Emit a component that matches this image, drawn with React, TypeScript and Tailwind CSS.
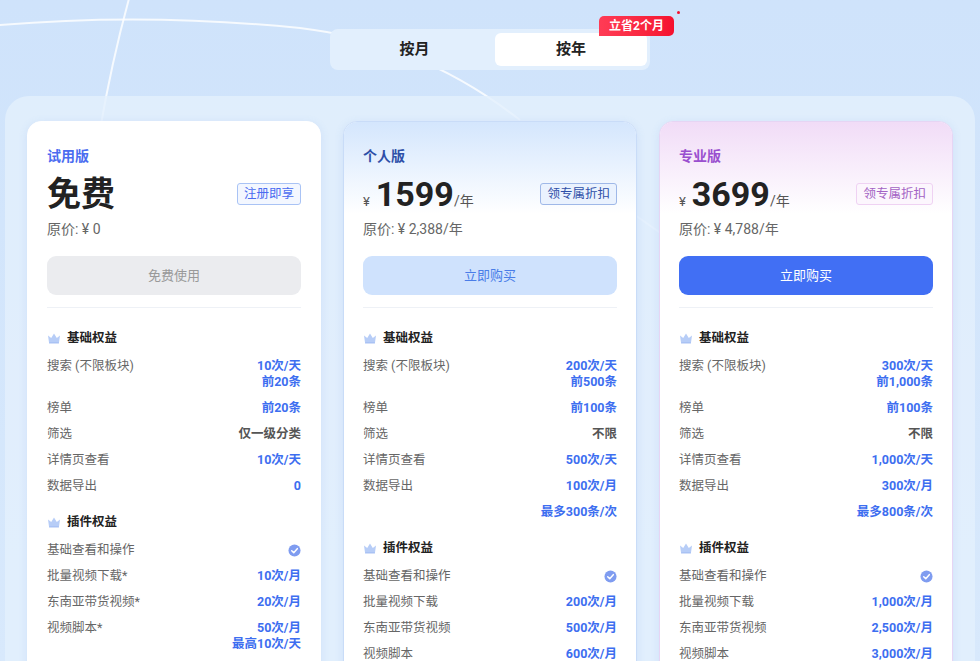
import React from 'react';

type Row = { label: string; values?: string[]; tone?: 'blue' | 'gray'; check?: boolean };

const Crown = () => (
  <svg width="14" height="12" viewBox="0 0 14 12" className="shrink-0">
    <path d="M1 3.5 L4.2 6 L7 1.5 L9.8 6 L13 3.5 L12 10.5 H2 Z" fill="#b7cdf7" />
    <rect x="2" y="10" width="10" height="1.6" rx="0.5" fill="#a9c2f4" />
  </svg>
);

const Check = () => (
  <svg width="13" height="13" viewBox="0 0 14 14">
    <circle cx="7" cy="7" r="6.5" fill="#7f9cf0" />
    <path d="M4 7.2 L6.2 9.3 L10 5" stroke="#fff" strokeWidth="1.6" fill="none" strokeLinecap="round" strokeLinejoin="round" />
  </svg>
);

function RowItem({ row }: { row: Row }) {
  return (
    <div className="flex justify-between py-[5px] leading-4 text-[12.5px]">
      <span className="text-[#666]">{row.label}</span>
      {row.check ? (
        <span className="flex items-center"><Check /></span>
      ) : (
        <div className={`text-right font-bold ${row.tone === 'gray' ? 'text-[#555]' : 'text-[#3d6ef0]'}`}>
          {row.values?.map((v) => <div key={v}>{v}</div>)}
        </div>
      )}
    </div>
  );
}

function Section({ title, rows }: { title: string; rows: Row[] }) {
  return (
    <div>
      <div className="flex items-center gap-1.5 text-[12.5px] font-bold text-[#222] leading-4 mb-[7px]">
        <Crown />
        {title}
      </div>
      {rows.map((r, i) => <RowItem key={i} row={r} />)}
    </div>
  );
}

type Plan = {
  name: string;
  nameColor: string;
  head: string;
  price: React.ReactNode;
  badge: string;
  badgeCls: string;
  original: string;
  btn: string;
  btnCls: string;
  basic: Row[];
  plugin: Row[];
  cardCls: string;
};

const plans: Plan[] = [
  {
    name: '试用版',
    nameColor: 'text-[#4a6cf0]',
    head: 'bg-white',
    price: <span className="text-[34px] font-bold text-[#222] leading-none">免费</span>,
    badge: '注册即享',
    badgeCls: 'border-[#a9c3f5] text-[#4a6cf0] bg-[#f3f7ff]',
    original: '原价: ¥ 0',
    btn: '免费使用',
    btnCls: 'bg-[#ebecef] text-[#999]',
    cardCls: 'border-white',
    basic: [
      { label: '搜索 (不限板块)', values: ['10次/天', '前20条'] },
      { label: '榜单', values: ['前20条'] },
      { label: '筛选', values: ['仅一级分类'], tone: 'gray' },
      { label: '详情页查看', values: ['10次/天'] },
      { label: '数据导出', values: ['0'] },
    ],
    plugin: [
      { label: '基础查看和操作', check: true },
      { label: '批量视频下载*', values: ['10次/月'] },
      { label: '东南亚带货视频*', values: ['20次/月'] },
      { label: '视频脚本*', values: ['50次/月', '最高10次/天'] },
    ],
  },
  {
    name: '个人版',
    nameColor: 'text-[#2e4fa8]',
    head: 'bg-gradient-to-b from-[#d4e6fd] to-white',
    price: (
      <span className="flex items-baseline text-[#222]">
        <span className="text-[13px] mr-1.5 text-[#555]">¥</span>
        <span className="text-[34px] font-bold leading-none">1599</span>
        <span className="text-[14px] text-[#555]">/年</span>
      </span>
    ),
    badge: '领专属折扣',
    badgeCls: 'border-[#9fb8e8] text-[#2e4fa8] bg-[#eaf2fe]',
    original: '原价: ¥ 2,388/年',
    btn: '立即购买',
    btnCls: 'bg-[#cfe2fd] text-[#4a7de8]',
    cardCls: 'border-[#c9dcf8]',
    basic: [
      { label: '搜索 (不限板块)', values: ['200次/天', '前500条'] },
      { label: '榜单', values: ['前100条'] },
      { label: '筛选', values: ['不限'], tone: 'gray' },
      { label: '详情页查看', values: ['500次/天'] },
      { label: '数据导出', values: ['100次/月'] },
      { label: '', values: ['最多300条/次'] },
    ],
    plugin: [
      { label: '基础查看和操作', check: true },
      { label: '批量视频下载', values: ['200次/月'] },
      { label: '东南亚带货视频', values: ['500次/月'] },
      { label: '视频脚本', values: ['600次/月'] },
    ],
  },
  {
    name: '专业版',
    nameColor: 'text-[#9a4fcf]',
    head: 'bg-gradient-to-b from-[#f1dcf7] to-white',
    price: (
      <span className="flex items-baseline text-[#222]">
        <span className="text-[13px] mr-1.5 text-[#555]">¥</span>
        <span className="text-[34px] font-bold leading-none">3699</span>
        <span className="text-[14px] text-[#555]">/年</span>
      </span>
    ),
    badge: '领专属折扣',
    badgeCls: 'border-[#efd2f3] text-[#a363c4] bg-[#fcf6fd]',
    original: '原价: ¥ 4,788/年',
    btn: '立即购买',
    btnCls: 'bg-[#416ff4] text-white',
    cardCls: 'border-[#e6d5f4]',
    basic: [
      { label: '搜索 (不限板块)', values: ['300次/天', '前1,000条'] },
      { label: '榜单', values: ['前100条'] },
      { label: '筛选', values: ['不限'], tone: 'gray' },
      { label: '详情页查看', values: ['1,000次/天'] },
      { label: '数据导出', values: ['300次/月'] },
      { label: '', values: ['最多800条/次'] },
    ],
    plugin: [
      { label: '基础查看和操作', check: true },
      { label: '批量视频下载', values: ['1,000次/月'] },
      { label: '东南亚带货视频', values: ['2,500次/月'] },
      { label: '视频脚本', values: ['3,000次/月'] },
    ],
  },
];

function Card({ p }: { p: Plan }) {
  return (
    <div className={`w-[294px] rounded-[14px] bg-white border shadow-[0_2px_10px_rgba(80,130,220,0.12)] overflow-hidden ${p.cardCls}`}>
      <div className={`px-[19px] pt-[24px] ${p.head}`}>
        <div className={`text-[14px] font-bold leading-5 ${p.nameColor}`}>{p.name}</div>
        <div className="flex items-center justify-between mt-[8px] h-[40px]">
          {p.price}
          <span className={`border rounded-[3px] px-1.5 py-[2px] text-[12.5px] leading-4 ${p.badgeCls}`}>{p.badge}</span>
        </div>
      </div>
      <div className="px-[19px]">
        <div className="text-[14px] text-[#666] mt-[5px] leading-5">{p.original}</div>
        <div className={`mt-[17px] h-[39px] rounded-[9px] flex items-center justify-center text-[13px] ${p.btnCls}`}>{p.btn}</div>
        <div className="h-px bg-[#eef1f6] mt-[12px]" />
        <div className="pt-[22px] flex flex-col gap-[15px] pb-6">
          <Section title="基础权益" rows={p.basic} />
          <Section title="插件权益" rows={p.plugin} />
        </div>
      </div>
    </div>
  );
}

export default function App() {
  return (
    <div
      className="relative w-[980px] h-[661px] overflow-hidden bg-gradient-to-b from-[#cfe3fb] to-[#d8e9fc]"
      style={{ fontFamily: 'Roboto, "Noto Sans CJK SC", sans-serif' }}
    >
      <svg className="absolute inset-0" width="980" height="661" viewBox="0 0 980 661">
        <path d="M-10 26 Q140 12 300 28 Q420 42 520 120" stroke="white" strokeOpacity="0.8" strokeWidth="2" fill="none" />
        <path d="M130 -5 Q112 60 100 130" stroke="white" strokeOpacity="0.8" strokeWidth="2" fill="none" />
        <path d="M560 160 Q640 220 700 260" stroke="white" strokeOpacity="0.5" strokeWidth="2" fill="none" />
      </svg>
      <div className="relative flex justify-center pt-[29px]">
        <div className="relative flex w-[320px] h-[41px] rounded-[8px] bg-[#e2effd] p-[4px] pr-[3px]">
          <div className="flex-1 flex items-center justify-center text-[15px] font-bold text-[#222]">按月</div>
          <div className="w-[152px] rounded-[6px] bg-white flex items-center justify-center text-[15px] font-bold text-[#222]">按年</div>
          <div className="absolute right-[-24px] top-[-13px] bg-gradient-to-r from-[#ff3b55] to-[#f5102e] text-white text-[12px] font-bold leading-4 px-[10px] py-[2px] rounded-[5px] rounded-bl-none">
            立省2个月
          </div>
          <span className="absolute right-[-30px] top-[-18px] w-[3px] h-[3px] rounded-full bg-[#f5102e]" />
        </div>
      </div>
      <div className="relative mx-[5px] mt-[26px] rounded-t-[24px] bg-[#e4f0fd]/80 h-[600px] flex justify-between px-[22px] pt-[25px]">
        {plans.map((p) => <Card key={p.name} p={p} />)}
      </div>
    </div>
  );
}
